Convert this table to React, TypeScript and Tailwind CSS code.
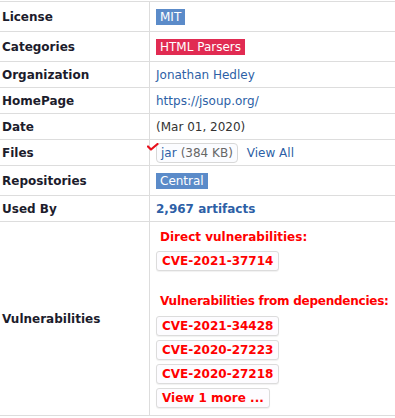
const font = { fontFamily: '"DejaVu Sans", Verdana, sans-serif' };

function Row({
  label,
  h,
  children,
  last = false,
}: {
  label: string;
  h: string;
  children: React.ReactNode;
  last?: boolean;
}) {
  return (
    <div className={`flex border-t border-[#dddddd] ${h} ${last ? 'border-b' : ''}`}>
      <div className="flex w-[150px] shrink-0 items-center border-r border-[#dddddd] pl-[2px] text-[12px] font-bold text-[#1c1c2c]">
        {label}
      </div>
      <div className="relative flex min-w-0 flex-1 items-center pl-[6px]">{children}</div>
    </div>
  );
}

function Cve({ children }: { children: React.ReactNode }) {
  return (
    <span className="inline-flex h-[20px] items-center rounded-[3px] border border-[#dcdcdc] bg-[#fdfcff] px-[5px] text-[12px] font-bold text-[#ff0000] shadow-[0_1px_1px_rgba(0,0,0,0.06)]">
      {children}
    </span>
  );
}

export default function App() {
  return (
    <div className="w-[395px] overflow-hidden bg-white pt-px text-[12px] text-[#222]" style={font}>
      <Row label="License" h="h-[30px]">
        <span className="bg-[#5b8bc9] px-[4px] py-px text-[12px] leading-[14px] text-white">MIT</span>
      </Row>
      <Row label="Categories" h="h-[30px]">
        <span className="bg-[#e12b52] px-[4px] py-px text-[12px] leading-[14px] text-white">HTML Parsers</span>
      </Row>
      <Row label="Organization" h="h-[26px]">
        <span className="text-[#2d5fa6]">Jonathan Hedley</span>
      </Row>
      <Row label="HomePage" h="h-[26px]">
        <span className="text-[#2d5fa6]">https://jsoup.org/</span>
      </Row>
      <Row label="Date" h="h-[26px]">
        <span className="text-[#333]">(Mar 01, 2020)</span>
      </Row>
      <Row label="Files" h="h-[26px]">
        <svg className="absolute left-[-3px] top-[3px]" width="12" height="8" viewBox="0 0 12 8">
          <path d="M1 3.5 L4 6.5 L10.5 1" fill="none" stroke="#e8101c" strokeWidth="2.2" strokeLinecap="round" strokeLinejoin="round" />
        </svg>
        <span className="inline-flex h-[20px] items-center rounded-[4px] border border-[#d8d8d8] bg-[#fbfcff] px-[4px]">
          <span className="text-[#2d5fa6]">jar</span>
          <span className="ml-[4px] text-[#666]">(384 KB)</span>
        </span>
        <span className="ml-[9px] text-[#2d5fa6]">View All</span>
      </Row>
      <Row label="Repositories" h="h-[30px]">
        <span className="bg-[#5b8bc9] px-[4px] py-px text-[12px] leading-[14px] text-white">Central</span>
      </Row>
      <Row label="Used By" h="h-[26px]">
        <span className="font-bold text-[#2d5fa6]">2,967 artifacts</span>
      </Row>
      <Row label="Vulnerabilities" h="h-[195px]" last>
        <div className="flex flex-col items-start self-start pt-[6px]">
          <div className="mb-[5px] whitespace-nowrap pl-[4px] text-[12px] font-bold text-[#ff0000]">
            Direct vulnerabilities:
          </div>
          <Cve>CVE-2021-37714</Cve>
          <div className="mb-[6px] mt-[21px] whitespace-nowrap pl-[4px] text-[12px] font-bold tracking-[-0.25px] text-[#ff0000]">
            Vulnerabilities from dependencies:
          </div>
          <div className="flex flex-col items-start gap-[4px]">
            <Cve>CVE-2021-34428</Cve>
            <Cve>CVE-2020-27223</Cve>
            <Cve>CVE-2020-27218</Cve>
            <Cve>View 1 more ...</Cve>
          </div>
        </div>
      </Row>
    </div>
  );
}
